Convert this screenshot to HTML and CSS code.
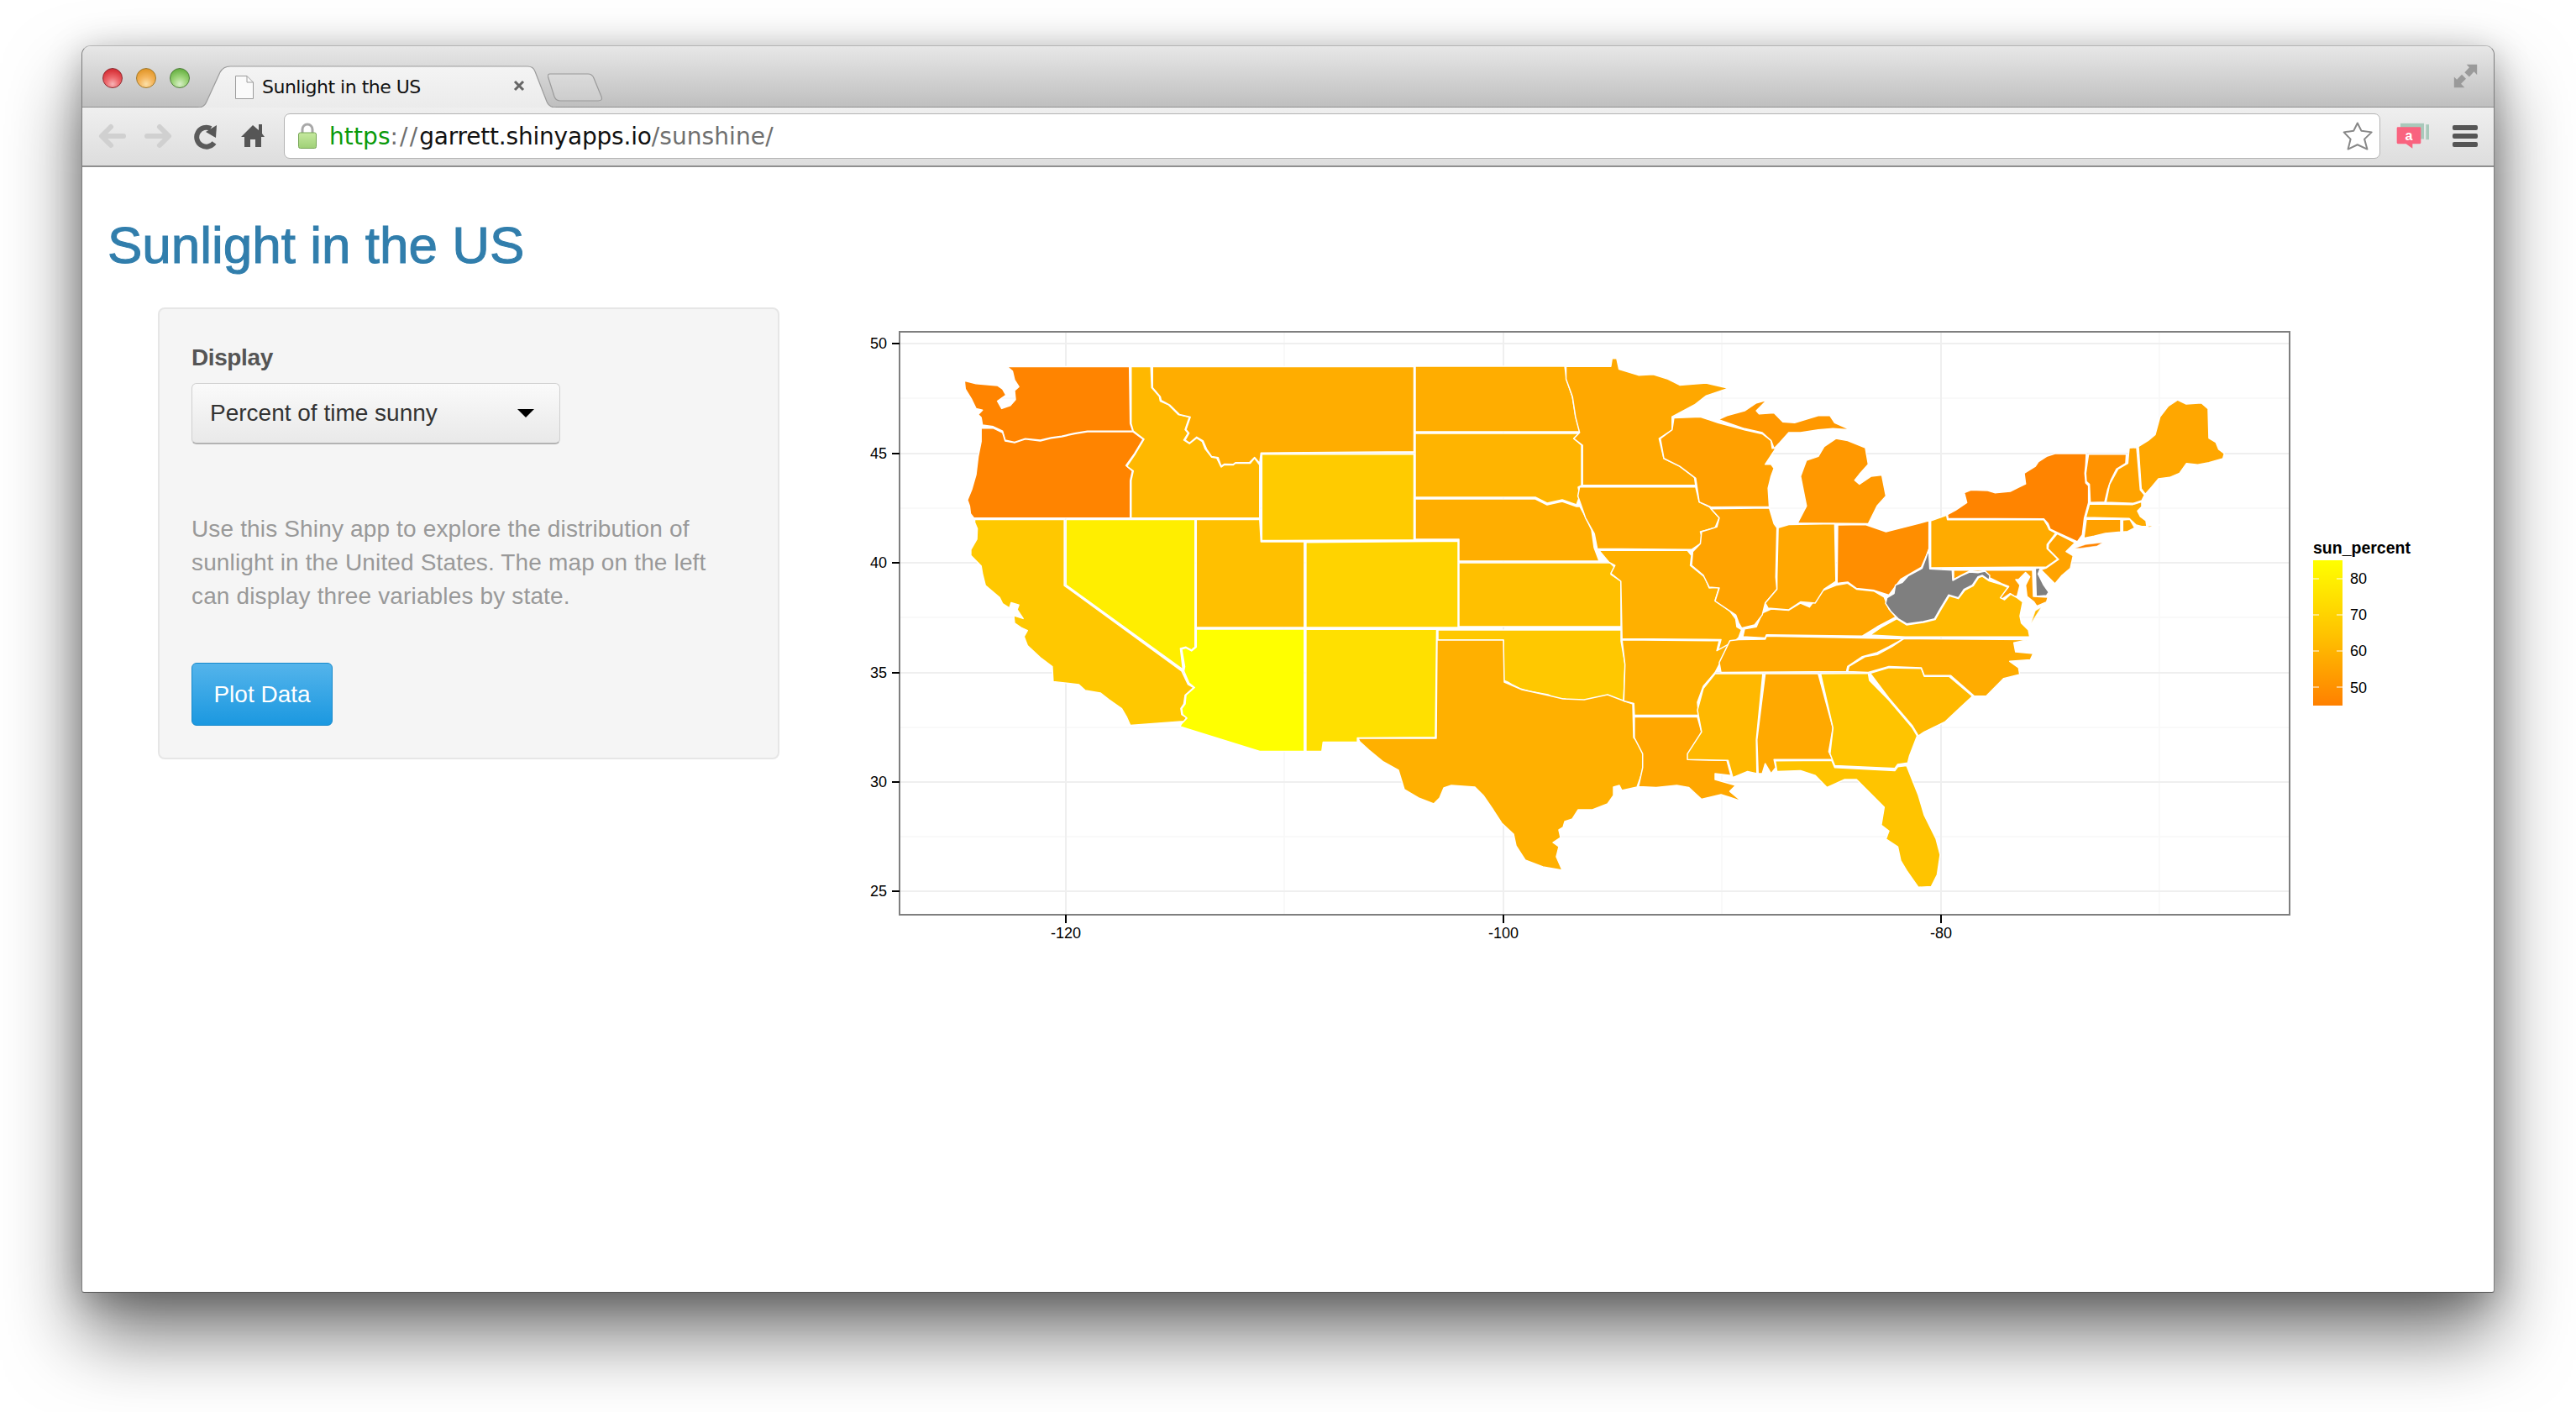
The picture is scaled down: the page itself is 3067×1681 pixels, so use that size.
FILE: index.html
```html
<!DOCTYPE html>
<html lang="en">
<head>
<meta charset="utf-8">
<title>Sunlight in the US</title>
<link rel="stylesheet" href="styles.css">
</head>
<body>
<div class="window">
  <header class="titlebar">
    <div class="lights">
      <span class="light red"></span>
      <span class="light amber"></span>
      <span class="light green"></span>
    </div>
    <div class="tab">
      <svg class="tab-shape" viewBox="0 0 430 50" width="430" height="50">
        <defs><linearGradient id="tabfill" x1="0" y1="0" x2="0" y2="1"><stop offset="0" stop-color="#f4f4f4"/><stop offset="1" stop-color="#ebebeb"/></linearGradient></defs>
        <path class="tab-fill" d="M0,50 Q7,50 10,43 L26,8 Q30,1 38,1 L392,1 Q399,1 401,7 L415,43 Q418,50 426,50 L430,51 L0,51 Z"/>
        <path class="tab-line" d="M0,50 Q7,50 10,43 L26,8 Q30,1 38,1 L392,1 Q399,1 401,7 L415,43 Q418,50 426,50"/>
      </svg>
      <svg class="doc" viewBox="0 0 22 28" width="22" height="28"><path class="doc-shape" d="M.5,.5 H14 L21.5,8 V27.5 H.5 Z"/><path class="doc-fold" d="M14,.5 V8 H21.5"/></svg>
      <span class="tab-title">Sunlight in the US</span>
      <svg class="tab-close" viewBox="0 0 14 14" width="14" height="14"><path d="M2,2 L12,12 M12,2 L2,12"/></svg>
    </div>
    <svg class="newtab" viewBox="0 0 66 34" width="66" height="34"><path d="M3,1 H48 Q53,1 55,6 L64,28 Q66,33 60,33 H15 Q10,33 8,28 L1,6 Q-1,1 3,1 Z"/></svg>
    <svg class="expand" viewBox="665 106 87 88" width="29" height="29"><path d="M750,108 H712 L722,119 L705,137 L722,153 L739,134 L750,146 Z M667,192 V153 L677,163 L695,145 L710,160 L692,178 L705,192 Z"/></svg>
  </header>

  <nav class="toolbar">
    <svg class="navbtn" viewBox="0 0 56 40" width="56" height="40"><path class="arrow" d="M42,20 H17 M27,9 L16,20 L27,31"/></svg>
    <svg class="navbtn" viewBox="0 0 56 40" width="56" height="40"><path class="arrow" d="M14,20 H39 M29,9 L40,20 L29,31"/></svg>
    <svg class="navbtn" viewBox="0 0 56 40" width="56" height="40"><path class="reload" d="M38,28 A11.5,11.5 0 1 1 34,11"/><path class="solid" d="M28,15 L41,7 L40,22 Z"/></svg>
    <svg class="navbtn" viewBox="0 0 56 40" width="56" height="40"><path class="solid" d="M28,7 L35,13 V6 H39 V17 L42,21 H38 V33 H31 V24 H25 V33 H18 V21 H14 Z"/></svg>
    <div class="address">
      <svg class="lock" viewBox="0 0 24 32" width="24" height="32">
        <defs><linearGradient id="lockfill" x1="0" y1="0" x2="0" y2="1"><stop offset="0" stop-color="#c6e99f"/><stop offset="1" stop-color="#9fd077"/></linearGradient></defs>
        <path class="lock-arc" d="M6,13 V8 A6,6 0 0 1 18,8 V13"/>
        <rect class="lock-body" x="1.5" y="12" width="21" height="18.5" rx="2"/>
      </svg>
      <span class="url"><span class="url-scheme">https</span><span class="url-sep">://</span><span class="url-host">garrett.shinyapps.io</span><span class="url-dim">/sunshine/</span></span>
      <svg class="star" viewBox="265 310 115 108" width="38" height="36"><path d="M322,317 L336,345 L373,350 L347,375 L357,411 L322,395 L288,411 L297,375 L273,350 L308,345 Z"/></svg>
    </div>
    <svg class="ext" viewBox="460 320 120 95" width="40" height="32">
      <rect class="ext-back" x="475" y="322" width="84" height="56"/>
      <rect class="ext-back" x="566" y="326" width="11" height="54"/>
      <path class="ext-front" d="M466,335 H544 Q548,335 548,339 V391 Q548,395 544,395 H518 V412 L495,395 H466 Q462,395 462,391 V339 Q462,335 466,335 Z"/>
      <text class="ext-a" x="505" y="381">a</text>
    </svg>
    <div class="menu"><span></span><span></span><span></span></div>
  </nav>

  <main class="page">
    <h1 class="heading">Sunlight in the US</h1>
    <div class="row">
      <aside class="panel">
        <div class="field-label">Display</div>
        <div class="select"><span>Percent of time sunny</span><i class="caret"></i></div>
        <p class="help">Use this Shiny app to explore the distribution of sunlight in the United States. The map on the left can display three variables by state.</p>
        <button class="plot-btn" type="button">Plot Data</button>
      </aside>

      <svg class="chart" viewBox="1030 380 1870 760" width="1870" height="760">
        <defs><linearGradient id="legend" x1="0" y1="0" x2="0" y2="1"><stop offset="0" stop-color="#ffff00"/><stop offset=".5" stop-color="#ffc400"/><stop offset="1" stop-color="#ff8000"/></linearGradient></defs>
        <path class="grid-minor" d="M1071,474H2726M1071,605H2726M1071,735H2726M1071,866H2726M1071,996H2726M1529,396V1088M2050,396V1088M2571,396V1088"/>
        <path class="grid-major" d="M1071,409H2726M1071,540H2726M1071,670H2726M1071,801H2726M1071,931H2726M1071,1061H2726M1269,396V1088M1790,396V1088M2311,396V1088"/>

        <g transform="translate(1060,390) scale(.5102,.3571)">
          <path class="st c48" d="M272,130 L558,130 560,320 566,345 460,345 430,352 400,362 375,367 350,375 315,370 290,382 268,375 262,345 240,330 215,325 212,300 205,290 215,275 200,270 190,240 175,205 173,177 200,187 250,193 262,205 270,225 250,245 260,270 280,260 292,240 290,210 300,197 290,175 285,145 Z"/>
          <path class="st c48" d="M212,335 L240,335 262,350 268,378 290,384 315,372 350,378 375,369 400,364 430,354 460,347 566,347 590,372 570,420 550,460 565,478 560,510 560,635 195,635 187,620 185,595 180,575 190,540 200,490 205,430 212,380 Z"/>
          <path class="st id" d="M562,130 L608,130 610,200 628,230 630,245 650,258 672,290 698,298 688,340 695,352 685,375 698,387 715,368 728,380 735,405 750,432 762,435 772,465 780,457 800,458 805,452 840,452 850,435 862,458 862,635 562,635 562,510 567,478 552,462 572,420 592,372 567,345 562,320 Z"/>
          <path class="st mt" d="M612,130 L1222,130 1222,414 865,418 862,452 850,433 838,450 806,450 800,456 780,455 772,462 765,433 750,430 738,405 730,378 715,365 698,385 688,375 697,352 690,340 700,298 675,290 652,258 632,243 630,230 612,200 Z"/>
          <path class="st wy" d="M867,422 L1222,422 1222,708 867,710 Z"/>
          <path class="st ut" d="M714,640 L862,640 865,714 966,714 966,1000 714,1000 Z"/>
          <path class="st co" d="M970,716 L1325,712 1325,1000 970,1000 Z"/>
          <path class="st nv" d="M410,640 L711,640 711,1065 703,1075 690,1065 677,1070 683,1140 410,858 Z"/>
          <path class="st ca" d="M197,640 L406,640 406,860 680,1145 695,1190 708,1200 688,1225 685,1255 678,1270 680,1290 692,1300 685,1313 560,1326 552,1300 540,1270 510,1240 490,1218 455,1210 440,1190 380,1180 378,1130 350,1100 320,1060 312,1030 320,1010 305,1000 290,985 288,960 310,970 296,940 300,925 282,917 278,935 262,920 255,900 222,860 215,820 212,795 188,760 188,740 202,705 203,670 197,650 Z"/>
          <path class="st az" d="M714,1005 L966,1005 966,1413 862,1413 676,1330 680,1320 692,1302 682,1290 680,1270 688,1255 690,1225 710,1200 697,1185 685,1145 687,1130 680,1072 690,1068 703,1078 714,1065 Z"/>
          <path class="st nm" d="M970,1006 L1275,1006 1272,1366 1090,1368 1090,1382 1010,1382 1007,1413 970,1413 Z"/>
        </g>

        <path class="st mt" d="M1685,436 L1863,436 1865,451 1872,472 1876,496 1881,514 1685,514 Z"/>
        <path class="st sd" d="M1685,516 L1881,516 1874,522 1883,530 1883,578 1879,580 1881,590 1877,601 1860,595 1842,599 1828,592 1685,592 Z"/>
        <path class="st ne" d="M1685,594 L1828,594 1842,601 1860,597 1877,603 1881,603 1888,616 1895,631 1898,652 1904,668 1737,668 1737,642 1685,642 Z"/>
        <path class="st ks" d="M1737,670 L1917,670 1923,676 1918,684 1930,692 1930,746 1737,746 Z"/>
        <path class="st ok" d="M1712,750 L1930,750 1930,763 1935,791 1933,835 1922,832 1912,828 1900,833 1888,834 1875,836 1863,832 1852,832 1843,827 1832,825 1821,823 1810,820 1800,815 1795,812 1790,810 1790,762 1712,762 Z"/>
        <path class="st tx" d="M1711,762 L1790,762 1791,812 1812,821 1844,828 1861,832 1886,833 1914,827 1935,835 1944,838 1945,878 1956,890 1959,905 1954,923 1949,937 1931,941 1928,935 1921,937 1921,947 1914,957 1896,964 1879,964 1872,975 1863,978 1861,985 1856,988 1858,997 1849,1003 1856,1008 1853,1020 1860,1036 1837,1032 1816,1024 1805,1007 1802,993 1788,980 1777,963 1766,947 1756,937 1728,935 1719,938 1714,950 1707,957 1689,950 1672,940 1665,917 1647,907 1630,893 1619,883 1617,879 1710,879 Z"/>

        <g transform="translate(1800,390) scale(.7015,.4719)">
          <path class="st mn" d="M92,98 L168,98 170,78 178,78 182,105 215,120 240,118 265,130 285,145 330,140 368,153 330,172 310,195 272,225 272,258 250,280 258,330 285,350 310,378 312,398 120,398 120,297 105,280 115,265 108,225 103,175 92,130 Z"/>
          <path class="st ia" d="M115,402 L312,402 318,440 335,452 352,480 345,505 320,515 325,540 305,560 145,558 140,520 125,480 118,450 112,425 Z"/>
          <path class="st mo" d="M148,562 L298,562 305,575 303,600 328,630 335,657 352,655 345,688 370,715 380,735 382,755 390,762 385,782 372,800 350,815 355,787 187,785 185,640 168,620 175,600 165,592 Z"/>
          <path class="st mo" d="M187,788 L352,790 348,815 370,797 360,830 352,850 345,870 325,905 315,945 317,978 208,978 207,948 190,942 192,850 Z"/>
          <path class="st la" d="M208,982 L315,982 322,1020 300,1090 365,1092 372,1130 345,1125 345,1140 380,1155 370,1170 390,1195 370,1185 355,1178 322,1190 300,1160 280,1155 245,1160 215,1158 222,1110 222,1075 208,1035 Z"/>
          <path class="st ms" d="M345,873 L426,873 415,1040 416,1125 400,1120 375,1135 367,1092 298,1090 298,1075 322,1020 315,965 325,910 Z"/>
          <path class="st al" d="M430,873 L520,873 545,1010 538,1070 545,1090 445,1090 448,1110 440,1125 430,1100 425,1125 418,1125 416,1040 Z"/>
          <path class="st ga" d="M524,873 L605,872 607,890 640,940 660,975 680,1010 688,1030 675,1080 672,1098 655,1102 650,1112 548,1105 540,1075 545,1010 Z"/>
          <path class="st ga" d="M447,1093 L543,1092 548,1110 650,1118 655,1108 670,1105 690,1180 700,1230 720,1290 727,1330 722,1380 712,1410 690,1412 670,1370 660,1345 655,1310 635,1290 640,1270 627,1255 632,1210 605,1170 585,1140 565,1140 535,1160 515,1130 490,1118 450,1120 Z"/>
          <path class="st sc" d="M608,872 L640,858 695,860 700,880 742,880 782,930 760,960 735,995 700,1020 690,1030 680,1005 660,970 640,935 Z"/>
          <path class="st nc" d="M570,868 L572,855 600,830 620,825 645,805 665,785 878,787 852,795 855,818 885,822 880,838 845,842 860,858 862,875 835,885 805,930 785,930 745,878 700,878 695,858 640,855 605,870 Z"/>
          <path class="st tn" d="M355,870 L352,845 370,790 385,787 430,786 432,778 665,785 640,805 620,820 595,830 570,855 568,868 Z"/>
          <path class="st ky" d="M392,780 L395,760 415,755 425,720 440,710 470,713 490,695 505,705 525,665 550,650 570,645 585,660 615,665 632,680 640,710 652,730 620,755 595,778 432,775 430,783 Z"/>
          <path class="st il" d="M338,457 L437,455 445,495 450,505 448,630 450,660 430,695 425,725 412,750 390,758 385,745 380,725 345,690 352,657 335,655 325,625 305,600 307,565 320,545 322,515 348,503 352,480 Z"/>
          <path class="st wi" d="M275,228 L320,225 350,240 395,258 425,268 440,285 442,305 450,300 430,345 440,345 445,355 440,375 435,405 437,452 338,453 318,440 312,380 285,350 258,330 252,280 272,258 Z"/>
          <path class="st mi" d="M350,232 L365,222 395,210 415,190 433,183 415,210 420,218 445,215 460,238 480,240 520,222 540,222 548,240 575,258 545,255 520,258 490,265 470,265 455,290 445,305 440,285 425,265 395,255 Z"/>
          <path class="st mi" d="M550,280 L570,285 600,303 605,345 590,370 582,385 590,395 610,375 628,372 635,425 620,450 605,495 485,493 500,450 490,375 500,335 520,325 530,300 Z"/>
          <path class="st in" d="M452,505 L470,497 548,495 550,640 530,660 515,695 490,692 470,712 435,708 430,695 450,660 450,630 Z"/>
          <path class="st oh" d="M553,498 L600,497 635,515 670,502 708,487 708,560 695,605 660,635 640,675 615,663 585,658 570,642 552,645 Z"/>
        </g>

        <g transform="translate(2220,520) scale(.3333)">
          <path class="st c48" d="M298,292 L296,278 325,262 365,235 356,200 380,190 440,192 465,200 520,195 550,180 575,168 570,130 610,105 620,90 650,70 680,60 792,60 790,100 787,130 790,165 800,175 800,235 785,290 778,350 760,375 688,342 663,330 655,310 640,293 Z"/>
          <path class="st vt" d="M800,62 L935,62 933,95 900,115 880,155 868,190 858,233 806,235 803,170 792,160 790,130 795,95 Z"/>
          <path class="st nh" d="M945,40 L972,38 985,190 1000,208 990,228 960,238 862,234 875,170 905,115 940,95 Z"/>
          <path class="st me" d="M978,35 L1013,13 1038,-8 1055,-71 1085,-110 1118,-132 1149,-117 1203,-121 1227,-100 1230,5 1255,20 1265,45 1285,60 1280,78 1230,92 1190,100 1150,95 1125,130 1090,145 1050,150 1025,180 1003,205 988,185 Z"/>
          <path class="st pa" d="M803,240 L958,242 990,232 990,250 975,265 985,285 1005,300 1008,320 990,320 970,315 945,292 790,288 Z"/>
          <path class="st nolinefill" d="M1010,318 L1055,315 1015,325 Z"/>
          <path class="st ct" d="M792,295 L915,295 915,340 860,345 820,355 783,362 Z"/>
          <path class="st me" d="M922,297 L948,295 965,325 940,338 922,340 Z"/>
          <path class="st c48 thin" d="M750,398 L790,385 850,378 830,390 770,398 Z"/>
          <path class="st pa" d="M236,300 L293,280 296,296 640,296 652,315 660,332 683,344 652,385 652,400 690,437 650,465 236,468 Z"/>
          <path class="st nh" d="M688,346 L752,378 720,410 745,425 735,470 705,495 680,525 630,475 650,468 693,438 655,400 657,383 Z"/>
          <path class="st na" d="M610,470 L628,468 620,490 640,530 658,555 650,567 613,570 Z"/>
          <path class="st ct" d="M318,476 L600,476 603,570 655,573 650,590 615,605 605,590 580,570 575,530 590,500 575,485 550,510 540,510 555,530 545,570 535,570 520,560 490,580 483,573 515,535 490,525 450,505 440,505 445,495 430,480 405,482 375,480 345,495 318,510 Z"/>
          <path class="st na" d="M229,402 L233,472 313,476 315,513 345,497 375,483 405,485 430,480 447,495 445,512 420,495 405,500 385,530 355,545 335,575 300,565 270,615 250,650 210,660 150,668 120,650 95,625 75,595 80,575 105,560 110,530 135,520 155,497 205,470 220,430 Z"/>
          <path class="st va" d="M20,708 L60,680 115,650 150,672 210,663 252,653 272,618 302,568 335,578 358,548 388,532 407,503 420,498 445,515 490,528 512,538 485,575 500,582 522,562 545,575 565,590 555,640 560,665 585,690 590,715 145,715 Z"/>
          <path class="st va thin" d="M595,665 L630,610 610,622 Z"/>
        </g>

        <rect class="plot-border" x="1071" y="395" width="1655" height="694"/>
        <path class="tick" d="M1062,409H1071M1062,540H1071M1062,670H1071M1062,801H1071M1062,931H1071M1062,1061H1071M1269,1089V1099M1790,1089V1099M2311,1089V1099"/>
        <g class="axis-y">
          <text x="1056" y="415">50</text><text x="1056" y="546">45</text><text x="1056" y="676">40</text>
          <text x="1056" y="807">35</text><text x="1056" y="937">30</text><text x="1056" y="1067">25</text>
        </g>
        <g class="axis-x">
          <text x="1269" y="1117">-120</text><text x="1790" y="1117">-100</text><text x="2311" y="1117">-80</text>
        </g>
        <text class="legend-title" x="2754" y="659">sun_percent</text>
        <rect class="legend-bar" x="2754" y="667" width="35" height="173" fill="url(#legend)"/>
        <path class="legend-tick" d="M2754,689H2761M2782,689H2789M2754,732H2761M2782,732H2789M2754,775H2761M2782,775H2789M2754,818H2761M2782,818H2789"/>
        <g class="legend-labels">
          <text x="2798" y="695">80</text><text x="2798" y="738">70</text><text x="2798" y="781">60</text><text x="2798" y="825">50</text>
        </g>
      </svg>
    </div>
  </main>
</div>
</body>
</html>
```
FILE: styles.css
```css
* { box-sizing: border-box; }
html, body { margin: 0; height: 100%; background: #fff; overflow: hidden; }
body { padding: 54px 97px 0; font-family: "Liberation Sans", Arial, sans-serif; }

.window {
  width: 2873px;
  height: 1485px;
  display: flex;
  flex-direction: column;
  background: #fff;
  border: 1px solid #7d7d7d;
  border-top-color: #b4b4b4;
  border-bottom-color: #555;
  border-radius: 11px 11px 3px 3px;
  box-shadow: 0 50px 90px rgba(0,0,0,.55), 0 8px 42px rgba(0,0,0,.26);
}

.titlebar {
  height: 73px;
  flex: none;
  display: flex;
  align-items: flex-start;
  padding-left: 24px;
  background: linear-gradient(#e7e7e7, #bfbfbf);
  border-bottom: 1px solid #8e8e8e;
  border-radius: 10px 10px 0 0;
}
.lights { display: flex; gap: 16px; margin-top: 26px; }
.light { width: 24px; height: 24px; border-radius: 50%; border: 1px solid; display: block; }
.red { border-color: #8f2a30; background: radial-gradient(circle at 50% 82%, #f7b4b6 0, #ee6c70 35%, #d9363c 75%, #c22c33 100%); }
.amber { border-color: #a27a2c; background: radial-gradient(circle at 50% 82%, #fbe0a8 0, #f5b760 38%, #e49a2e 78%, #cf8d2a 100%); }
.green { border-color: #4f7f3b; background: radial-gradient(circle at 50% 82%, #d8efc8 0, #a1d67e 38%, #6db548 78%, #5f9b41 100%); }

.tab { position: relative; width: 430px; height: 72px; margin-left: 10px; display: flex; align-items: center; padding: 25px 0 0 44px; }
.tab-shape { position: absolute; left: 0; top: 23px; }
.tab-fill { fill: url(#tabfill); }
.tab-line { fill: none; stroke: #9b9b9b; stroke-width: 1.2; }
.doc { position: relative; flex: none; }
.doc-shape { fill: #fafafa; stroke: #9c9c9c; }
.doc-fold { fill: none; stroke: #9c9c9c; }
.tab-title { position: relative; margin-left: 10px; font: 22px "DejaVu Sans", sans-serif; letter-spacing: -.5px; color: #111; white-space: nowrap; }
.tab-close { position: absolute; left: 375px; top: 40px; }
.tab-close path { fill: none; stroke: #666; stroke-width: 3; }
.newtab { margin: 32px 0 0 -14px; flex: none; }
.newtab path { fill: rgba(255,255,255,.16); stroke: #9a9a9a; stroke-width: 1.2; }
.expand { margin: 21px 19px 0 auto; flex: none; }
.expand path { fill: #9a9a9a; }

.toolbar {
  height: 71px;
  flex: none;
  display: flex;
  align-items: center;
  padding: 0 19px 2px 7px;
  background: linear-gradient(#efefef, #dddddd);
  border-bottom: 2px solid #8f8f8f;
}
.navbtn { flex: none; }
.arrow { fill: none; stroke: #d0d0d0; stroke-width: 6; stroke-linecap: round; stroke-linejoin: round; }
.reload { fill: none; stroke: #5a5a5a; stroke-width: 6; }
.solid { fill: #565656; }
.address {
  flex: 1;
  height: 54px;
  margin-left: 9px;
  display: flex;
  align-items: center;
  padding: 0 7px 0 15px;
  background: #fff;
  border: 1px solid #b3b3b3;
  border-radius: 7px;
}
.lock { flex: none; }
.lock-arc { fill: none; stroke: #a8a8a8; stroke-width: 3; }
.lock-body { fill: url(#lockfill); stroke: #76a655; }
.url { margin: 1px 0 0 14px; font: 28px "DejaVu Sans", sans-serif; letter-spacing: .1px; white-space: nowrap; }
.url-scheme { color: #0a9a0a; }
.url-sep { color: #6f6f6f; letter-spacing: 2.1px; }
.url-dim { color: #6f6f6f; }
.url-host { color: #111; letter-spacing: -.2px; }
.star { margin-left: auto; flex: none; }
.star path { fill: #fff; stroke: #888; stroke-width: 6; stroke-linejoin: round; }
.ext { flex: none; margin-left: 19px; }
.ext-back { fill: #a9c9bb; }
.ext-front { fill: #f9637f; }
.ext-a { fill: #fff; font: 700 48px "Liberation Sans", sans-serif; text-anchor: middle; }
.menu { flex: none; width: 30px; margin-left: 27px; display: flex; flex-direction: column; gap: 4px; }
.menu span { height: 6px; border-radius: 2px; background: #555; display: block; }

.page { flex: 1; padding: 62px 0 0 30px; }
.heading { margin: 0; font-size: 62px; line-height: 62px; font-weight: 400; color: #317eac; -webkit-text-stroke: 1px #317eac; }
.row { display: flex; align-items: flex-start; margin-top: 43px; }
.panel {
  width: 740px;
  flex: none;
  margin-left: 60px;
  padding: 38px 38px 38px;
  background: #f5f5f5;
  border: 2px solid #e6e6e6;
  border-radius: 8px;
  font-size: 28px;
}
.field-label { line-height: 40px; font-weight: 700; color: #555; letter-spacing: -.4px; }
.select {
  width: 439px;
  height: 73px;
  margin-top: 10px;
  display: flex;
  align-items: center;
  justify-content: space-between;
  padding: 0 30px 0 21px;
  color: #333;
  background: linear-gradient(#fafafa, #e9e9e9);
  border: 1px solid #d0d0d0;
  border-bottom: 2px solid #b3b3b3;
  border-radius: 6px;
}
.caret { width: 0; height: 0; border-left: 10px solid transparent; border-right: 10px solid transparent; border-top: 10px solid #000; }
.help { max-width: 640px; margin: 81px 0 59px; line-height: 40px; color: #999; letter-spacing: .15px; }
.plot-btn {
  display: block;
  width: 168px;
  height: 75px;
  padding: 0;
  font: 28px "Liberation Sans", sans-serif;
  color: #fff;
  background: linear-gradient(#54b4eb, #1b98e0);
  border: 1px solid #178acc;
  border-radius: 6px;
}

.chart { flex: none; margin: 14px 0 0 102px; display: block; }
.grid-major { fill: none; stroke: #efefef; stroke-width: 2; }
.grid-minor { fill: none; stroke: #f8f8f8; stroke-width: 1.5; }
.st { stroke: #fff; stroke-width: 1.5; stroke-linejoin: round; vector-effect: non-scaling-stroke; }
.thin { stroke-width: .5; }
.nolinefill { fill: #ffa500; }
.c48 { fill: #ff8400; }
.id { fill: #ffb800; }
.mt { fill: #ffad00; }
.wy { fill: #ffcb00; }
.ut { fill: #ffc000; }
.co { fill: #ffd300; }
.nv { fill: #ffee00; }
.ca { fill: #ffc800; }
.az { fill: #ffff00; }
.nm { fill: #ffe000; }
.sd { fill: #ffb400; }
.ne { fill: #ffae00; }
.ks { fill: #ffc000; }
.ok { fill: #ffc800; }
.tx { fill: #ffb000; }
.mn { fill: #ffa800; }
.ia { fill: #ffaa00; }
.mo { fill: #ffb000; }
.la { fill: #ffa700; }
.ms { fill: #ffb800; }
.al { fill: #ffa900; }
.ga { fill: #ffc400; }
.sc { fill: #ffb900; }
.nc { fill: #ffac00; }
.tn { fill: #ffa900; }
.ky { fill: #ffa600; }
.il { fill: #ffa300; }
.wi { fill: #ffa000; }
.mi { fill: #ff9800; }
.in { fill: #ffa700; }
.oh { fill: #ff8e00; }
.vt { fill: #ff9200; }
.nh { fill: #ffa300; }
.me { fill: #ffa700; }
.pa { fill: #ffab00; }
.ct { fill: #ffa000; }
.va { fill: #ffb900; }
.na { fill: #7f7f7f; }
.plot-border { fill: none; stroke: #7f7f7f; stroke-width: 2; }
.tick { fill: none; stroke: #000; stroke-width: 2; }
.axis-y text { font-size: 18px; text-anchor: end; fill: #000; }
.axis-x text { font-size: 18px; text-anchor: middle; fill: #000; }
.legend-title { font-size: 19.5px; font-weight: 700; fill: #000; }
.legend-tick { fill: none; stroke: #fff; stroke-width: 1; }
.legend-labels text { font-size: 18px; fill: #000; }
```
